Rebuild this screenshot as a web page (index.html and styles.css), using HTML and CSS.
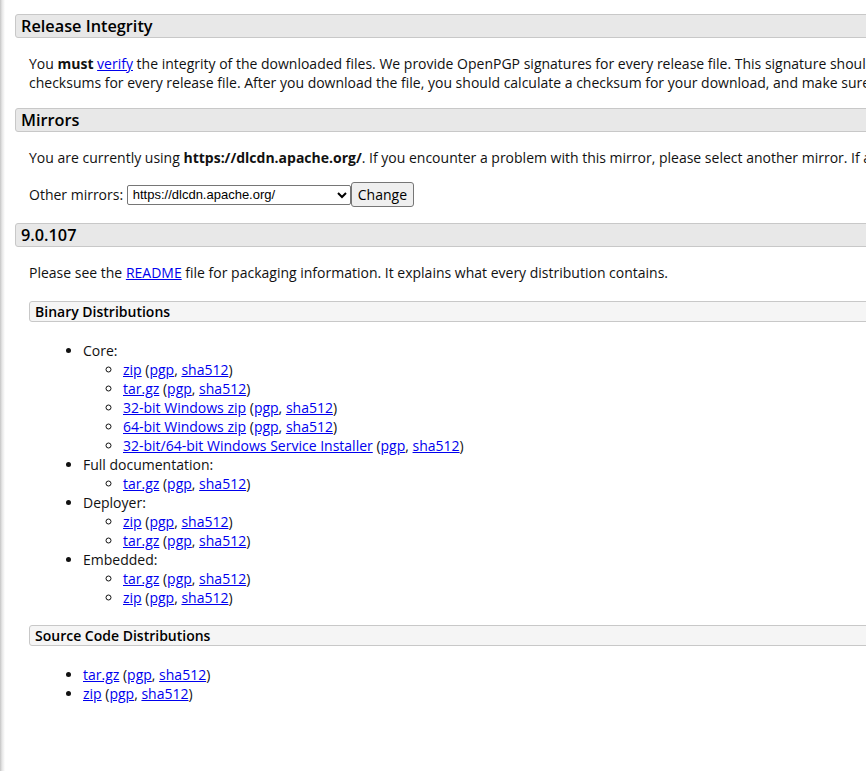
FILE: index.html
```html
<!DOCTYPE html>
<html lang="en">
<head>
<meta charset="utf-8">
<title>Apache Tomcat 9 Downloads</title>
<link rel="stylesheet" href="styles.css">
</head>
<body>
<div class="page">
  <h3 class="bar">Release Integrity</h3>
  <div class="text">
    <p class="nowrap">You <strong>must</strong> <a href="#">verify</a> the integrity of the downloaded files. We provide OpenPGP signatures for every release file. This signature should be matched against the <a href="#">KEYS</a> file which contains the OpenPGP keys of Tomcat's Release Managers. We also provide SHA-512<br>checksums for every release file. After you download the file, you should calculate a checksum for your download, and make sure it is the same as ours.</p>
  </div>

  <h3 class="bar">Mirrors</h3>
  <div class="text">
    <p class="nowrap">You are currently using <strong>https://dlcdn.apache.org/</strong>. If you encounter a problem with this mirror, please select another mirror. If all mirrors are failing, there are <i>backup</i> mirrors (at the end of the mirrors list) that should be available.</p>
    <form class="mirror-form" action="#">
      <label>Other mirrors: </label><select class="mirror-select"><option>https://dlcdn.apache.org/</option></select><button type="button" class="change-btn">Change</button>
    </form>
  </div>

  <h3 class="bar">9.0.107</h3>
  <div class="text">
    <p>Please see the <a href="#">README</a> file for packaging information. It explains what every distribution contains.</p>

    <h4 class="subbar">Binary Distributions</h4>
    <div class="subtext">
      <ul class="list">
        <li>Core:
          <ul class="sublist">
            <li><a href="#">zip</a> (<a href="#">pgp</a>, <a href="#">sha512</a>)</li>
            <li><a href="#">tar.gz</a> (<a href="#">pgp</a>, <a href="#">sha512</a>)</li>
            <li><a href="#">32-bit Windows zip</a> (<a href="#">pgp</a>, <a href="#">sha512</a>)</li>
            <li><a href="#">64-bit Windows zip</a> (<a href="#">pgp</a>, <a href="#">sha512</a>)</li>
            <li><a href="#">32-bit/64-bit Windows Service Installer</a> (<a href="#">pgp</a>, <a href="#">sha512</a>)</li>
          </ul>
        </li>
        <li>Full documentation:
          <ul class="sublist">
            <li><a href="#">tar.gz</a> (<a href="#">pgp</a>, <a href="#">sha512</a>)</li>
          </ul>
        </li>
        <li>Deployer:
          <ul class="sublist">
            <li><a href="#">zip</a> (<a href="#">pgp</a>, <a href="#">sha512</a>)</li>
            <li><a href="#">tar.gz</a> (<a href="#">pgp</a>, <a href="#">sha512</a>)</li>
          </ul>
        </li>
        <li>Embedded:
          <ul class="sublist">
            <li><a href="#">tar.gz</a> (<a href="#">pgp</a>, <a href="#">sha512</a>)</li>
            <li><a href="#">zip</a> (<a href="#">pgp</a>, <a href="#">sha512</a>)</li>
          </ul>
        </li>
      </ul>
    </div>

    <h4 class="subbar">Source Code Distributions</h4>
    <div class="subtext">
      <ul class="list">
        <li><a href="#">tar.gz</a> (<a href="#">pgp</a>, <a href="#">sha512</a>)</li>
        <li><a href="#">zip</a> (<a href="#">pgp</a>, <a href="#">sha512</a>)</li>
      </ul>
    </div>
  </div>
</div>
</body>
</html>
```

FILE: styles.css
```css
html, body {
  margin: 0;
  padding: 0;
  overflow: hidden;
  background: #fff;
}

body {
  font-family: "Open Sans", "DejaVu Sans", sans-serif;
  font-size: 14px;
  line-height: 19px;
  color: #111;
  background: linear-gradient(to right, #c4c4c4 0, #e6e6e6 2px, #f6f6f6 4px, #fff 5px);
  min-height: 771px;
}

.page {
  width: 1800px;
  padding: 14px 0 40px 15px;
}

a {
  color: #0000ee;
  text-decoration: underline;
}

.bar {
  margin: 0;
  padding: 0 5px;
  font-size: 16.3px;
  font-weight: 600;
  line-height: 22px;
  color: #000;
  background: #e8e8e8;
  border: 1px solid #c8c8c8;
  border-radius: 3px;
}

.text {
  margin-left: 14px;
  padding-bottom: 16px;
}

.text p {
  margin: 16px 0 0 0;
}

.nowrap {
  white-space: nowrap;
}

.mirror-form {
  margin: 15px 0 0 0;
  display: flex;
  align-items: center;
  height: 25px;
}

.mirror-form label {
  white-space: pre;
}

.mirror-select {
  width: 224px;
  height: 20px;
  margin: 0;
  padding: 0 0 0 1px;
  font-family: "Liberation Sans", Arial, sans-serif;
  font-size: 13px;
  color: #000;
  background: #fff;
  border: 1px solid #767676;
  border-radius: 2px;
}

.change-btn {
  height: 25px;
  padding: 0 6px;
  font-family: "Open Sans", sans-serif;
  font-size: 14px;
  color: #000;
  background: #efefef;
  border: 1px solid #767676;
  border-radius: 3px;
}

.subbar {
  margin: 18px 0 0 0;
  padding: 0 5px;
  font-size: 14px;
  font-weight: 600;
  line-height: 19px;
  color: #000;
  background: #f5f5f5;
  border: 1px solid #c8c8c8;
  border-radius: 3px;
}

p + .subbar {
  margin-top: 19px;
}

.subtext {
  margin-left: 14px;
}

.list {
  margin: 19px 0 18px 0;
  padding-left: 40px;
  list-style: disc;
}

.sublist {
  margin: 0;
  padding-left: 40px;
  list-style: circle;
}
```
